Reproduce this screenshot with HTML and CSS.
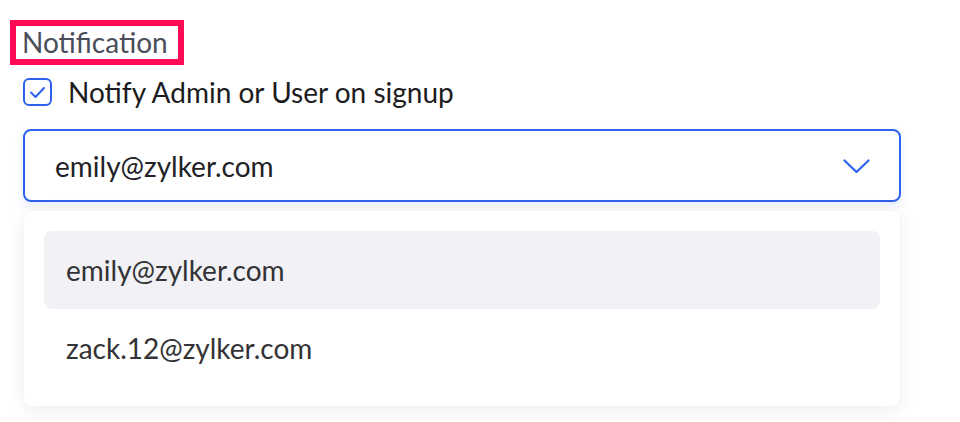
FILE: index.html
```html
<!DOCTYPE html>
<html lang="en">
<head>
<meta charset="utf-8">
<link rel="stylesheet" href="styles.css">
</head>
<body>
<div class="page">
  <div class="label-box"><span class="label">Notification</span></div>
  <div class="check-row">
    <span class="checkbox">
      <svg width="29" height="28" viewBox="0 0 29 28"><path d="M8 14.5 L12.5 19 L21 10" fill="none" stroke="#2e62ee" stroke-width="2" stroke-linecap="round" stroke-linejoin="round"/></svg>
    </span>
    <span class="check-text">Notify Admin or User on signup</span>
  </div>
  <div class="select">
    <span class="select-value">emily@zylker.com</span>
    <svg class="chevron" width="27" height="15" viewBox="0 0 27 15"><path d="M1.5 1.5 L13.5 13 L25.5 1.5" fill="none" stroke="#2e62ee" stroke-width="2.2" stroke-linecap="round" stroke-linejoin="round"/></svg>
  </div>
  <div class="dropdown">
    <div class="item active">emily@zylker.com</div>
    <div class="item">zack.12@zylker.com</div>
  </div>
</div>
</body>
</html>
```
FILE: styles.css
```css
html, body {
  margin: 0;
  padding: 0;
  background: #ffffff;
}
body {
  font-family: Lato, "Open Sans", sans-serif;
  width: 960px;
  height: 422px;
  overflow: hidden;
}
.page {
  padding: 20px 59px 0 23px;
}
.label-box {
  display: inline-block;
  margin-left: -13px;
  border: 6px solid #ff0a55;
  padding: 0 6px;
  width: 150px;
  height: 33px;
  box-sizing: content-box;
}
.label {
  display: block;
  font-size: 28px;
  line-height: 33px;
  color: #4a4e5a;
  white-space: nowrap;
}
.check-row {
  display: flex;
  align-items: center;
  gap: 16px;
  margin-top: 13px;
  height: 28px;
}
.checkbox {
  width: 29px;
  height: 28px;
  box-sizing: border-box;
  border: 2px solid #2e62ee;
  border-radius: 6px;
  position: relative;
  flex: none;
}
.checkbox svg {
  position: absolute;
  left: -2px;
  top: -2px;
}
.check-text {
  font-size: 28px;
  color: #1c1c1e;
}
.select {
  margin-top: 23px;
  height: 73px;
  box-sizing: border-box;
  border: 2px solid #2e62ee;
  border-radius: 8px;
  display: flex;
  align-items: center;
  justify-content: space-between;
  padding: 0 30px 0 30px;
  box-shadow: 0 4px 10px rgba(46, 98, 238, 0.12);
}
.select-value {
  font-size: 28px;
  color: #222226;
}
.chevron {
  margin-right: -1px;
  margin-top: 2px;
}
.dropdown {
  margin: 9px 1px 0 1px;
  height: 195px;
  box-sizing: border-box;
  padding: 20px;
  border-radius: 7px;
  background: #ffffff;
  box-shadow: 0 4px 20px rgba(0, 0, 0, 0.07), 0 0 2px rgba(0, 0, 0, 0.06);
}
.item {
  height: 78px;
  display: flex;
  align-items: center;
  padding-left: 22px;
  font-size: 28px;
  color: #333336;
  border-radius: 8px;
}
.item.active {
  background: #f1f1f6;
}
```
